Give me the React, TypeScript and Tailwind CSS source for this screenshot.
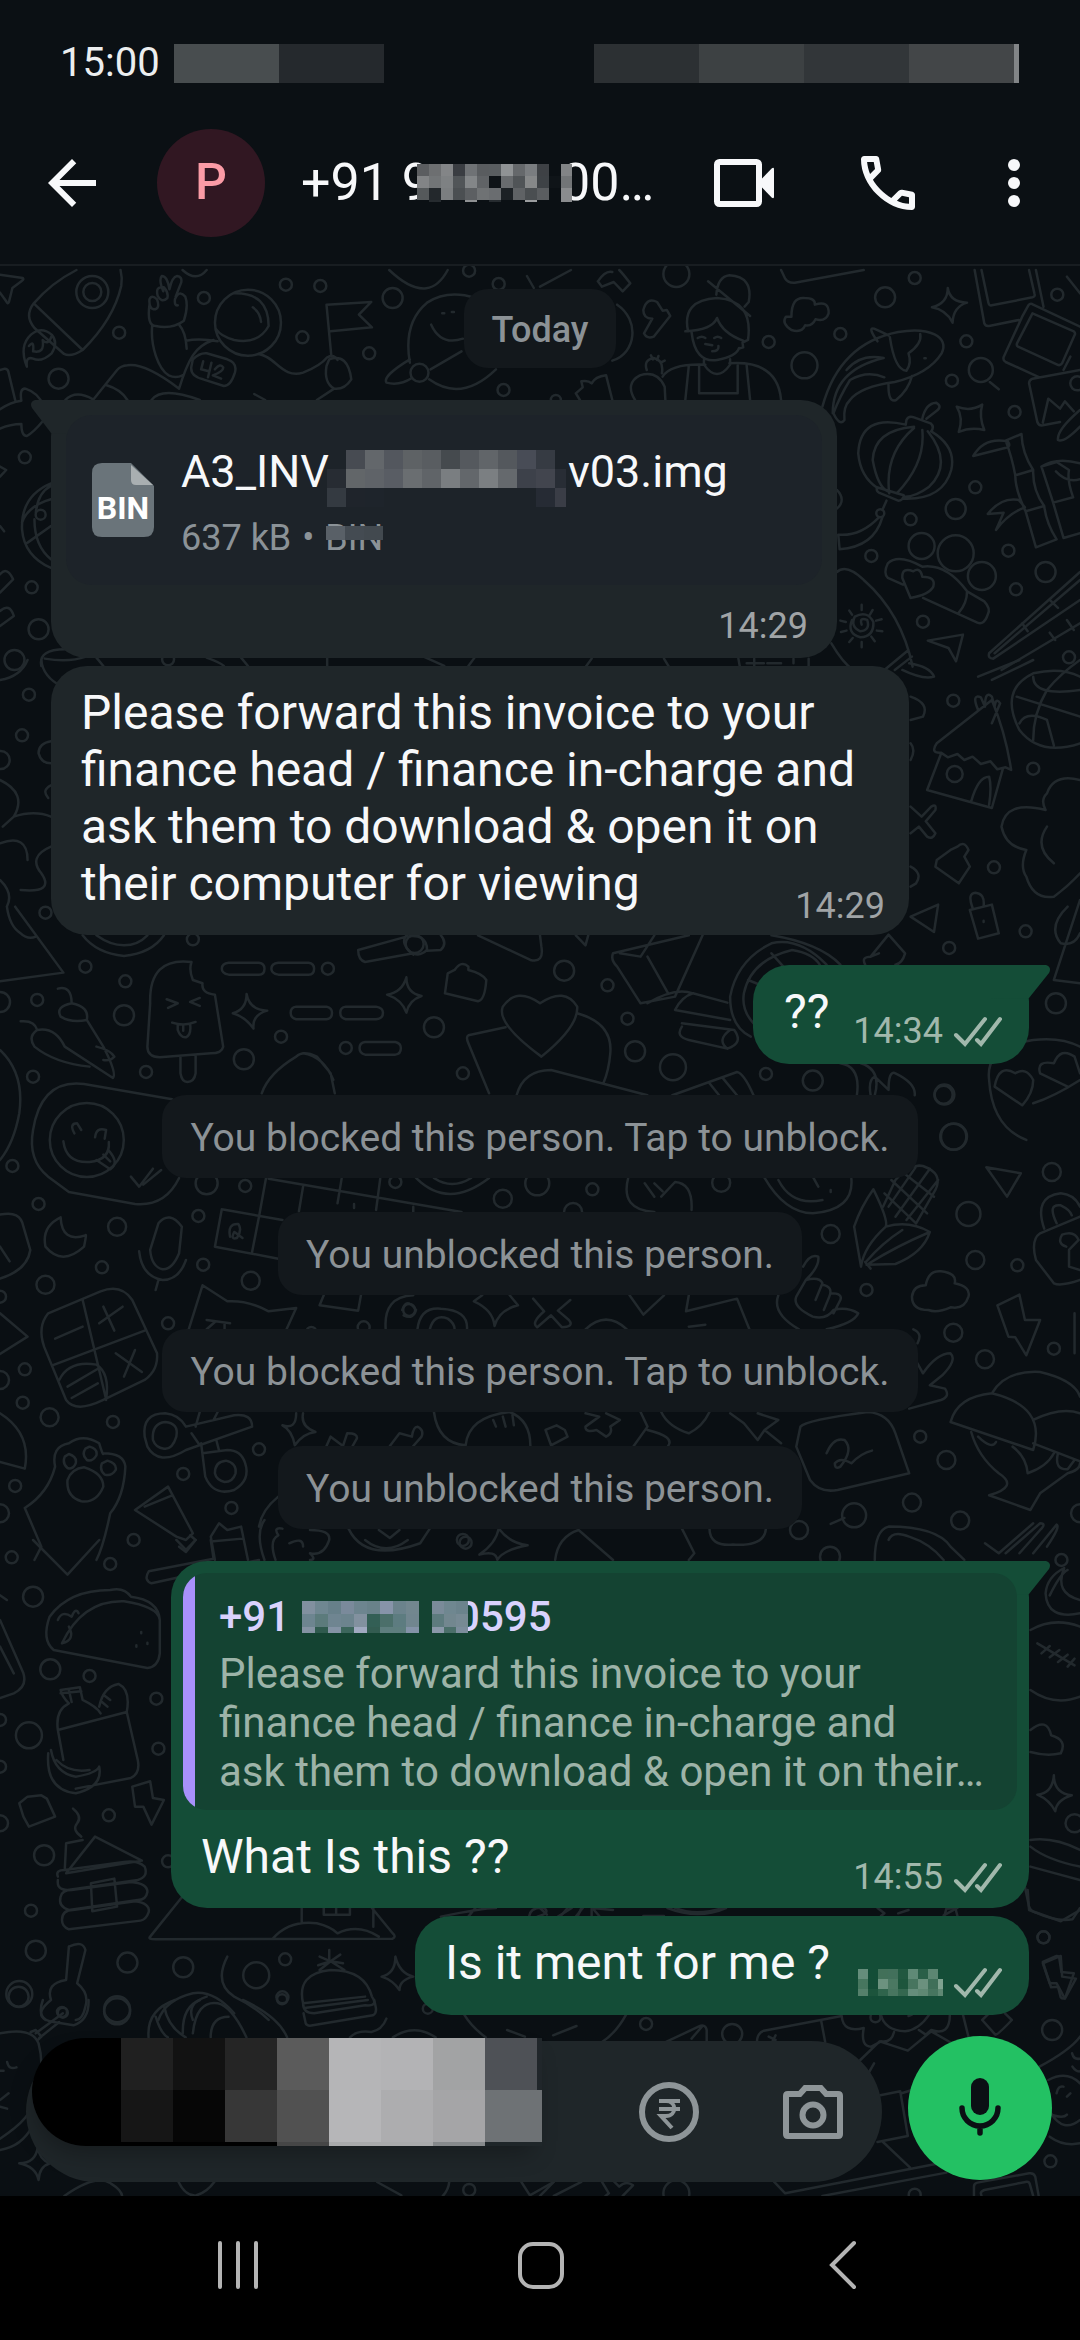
import type { ReactNode } from "react";

type Dot = [x: number, y: number, r: number];

interface Sheet {
  x: number;
  y: number;
  sx: number;
  sy: number;
  d: string[];
  dots: Dot[];
}

// Wallpaper doodles. Each sheet has its own origin and drawing scale.
const sheets: Sheet[] = [
  {
    x: 0,
    y: 270,
    sx: 0.3444,
    sy: 0.3333,
    d: [
      // star and fish at the left edge
      "M0 14L66 24Q70 28 64 32L36 54L26 96Q22 104 18 94L0 68M0 300L14 296Q22 296 24 304L44 390M0 418Q30 396 62 392Q56 354 74 356Q110 368 126 406M0 476Q30 462 62 462Q62 498 78 498Q98 486 122 456",
      // rocket
      "M222 0Q150 38 98 100Q70 138 100 174L186 252Q206 262 240 240Q330 148 352 48Q356 24 350 0M98 100L240 240M78 290Q54 228 90 194Q120 168 150 194Q170 218 150 250Q120 278 96 266Q74 258 78 290M84 228Q100 208 96 244Q130 252 124 210Q140 228 150 198",
      // astronaut
      "M434 104Q426 168 452 168Q500 178 534 152Q548 108 538 80Q520 58 508 88Q506 108 516 106M434 88Q440 72 456 88Q466 118 446 118Q432 114 434 88M458 78Q450 48 476 52Q490 68 486 84Q470 100 458 78M474 64Q460 28 470 18Q486 18 492 58Q500 20 514 18Q530 20 526 38L510 80M442 166C436 228 460 298 490 316Q510 326 530 316M520 164Q540 188 542 236M540 212Q580 204 632 214M520 356Q540 288 560 256Q580 224 620 210M520 356Q420 278 370 286Q350 288 340 300L270 390M310 346Q350 358 370 390M190 390Q220 358 270 388M440 390Q470 348 580 390M560 268Q580 248 600 250L660 268Q690 278 682 308Q670 348 650 348L590 328Q550 318 556 288ZM590 274L584 298L606 304M614 278L604 322M624 298Q640 278 648 292Q650 304 618 316L642 326M680 70Q780 68 780 168Q750 224 680 210Q640 198 628 178M734 112Q756 128 758 156M750 252C800 258 820 328 880 308Q930 288 950 262Q970 252 980 270M738 372L770 390",
      // flag
      "M948 104L1078 96L1042 134L1080 172L960 184M948 104L962 258M956 268Q1010 248 1020 328Q1000 360 970 356Q940 338 948 288ZM970 356L920 390",
      // planet
      "M1190 268Q1110 318 1122 338Q1160 348 1196 324M1250 298L1340 244M1246 328Q1340 398 1440 298M1190 278Q1170 158 1240 98Q1300 58 1380 84M1252 164Q1280 228 1344 206M1284 130h6M1312 126h6M1130 0C1220 88 1270 58 1300 0M530 0Q570 38 600 0M1530 18L1550 54",
      // ball
      "M148 640Q60 678 64 778Q70 858 148 894M64 758Q80 708 148 688M104 728Q110 668 148 648M80 818L148 768M100 748Q100 828 148 868M0 590L18 600L0 620M0 768L12 784M0 913Q20 888 38 928L0 968M0 1023Q28 998 40 1038L0 1068",
      "M120 1188Q110 1138 190 1138M130 1166Q200 1178 250 1160M280 1163L300 1188M600 1163Q640 1178 650 1188M700 1163L720 1188M950 1160V1188M1230 1160L1290 1188M1380 1160L1360 1188",
    ],
    dots: [
      [268, 66, 16], [268, 66, 9], [346, 188, 6], [170, 326, 10], [592, 84, 6], [830, 44, 6], [930, 48, 6], [878, 202, 6],
      [1140, 84, 10], [1072, 250, 6], [1462, 360, 6], [1448, 42, 6], [1362, 2, 6], [720, 158, 33], [1218, 308, 9], [72, 562, 6],
      [92, 952, 6], [112, 1078, 10], [42, 1170, 10], [488, 1168, 6], [118, 734, 5],
    ],
  },
  {
    x: 540,
    y: 270,
    sx: 0.3444,
    sy: 0.3333,
    d: [
      "M0 50L90 0M168 34Q190 0 210 6M262 40Q240 10 230 0M168 34L180 50L214 36L240 64L262 40M700 0L712 26Q720 40 740 38L940 0M224 104C290 150 280 250 210 272",
      // worker
      "M300 120Q310 80 340 96L356 122L368 120L378 138L330 200Q310 208 302 190L326 146Q300 146 300 120M488 34L610 138M512 74Q516 20 550 16Q620 20 606 96L594 110M430 184Q410 90 514 84Q620 90 604 210L588 218L590 232L578 236M440 186Q450 280 514 270Q570 260 578 234M422 184Q500 180 514 144Q530 190 590 212M458 204q12 -8 22 0M506 204q10 -8 20 0M480 222L500 226M500 244Q520 244 518 228M476 270V284Q514 340 552 284V268M356 320Q380 280 480 284M550 280Q690 270 700 390M432 288L422 390M462 286V370H574V286M600 286L610 390M276 390Q246 340 290 316Q340 300 362 350L364 390M310 300Q300 270 330 264Q360 270 354 310M322 256l6 12M344 258l-4 12M362 272l-12 6M104 370L124 352L120 334Q140 330 150 340Q160 320 192 316L210 390M104 370L116 390",
      // cloud
      "M730 140Q730 80 768 84Q800 84 798 104Q840 90 838 130Q830 156 800 148Q790 170 770 166Q760 190 730 180Q700 160 714 140Z",
      // koi
      "M820 410Q870 220 1040 186C1130 170 1190 200 1166 250Q1130 310 1030 336Q930 350 900 390Q880 410 884 450Q870 470 852 430Q870 380 900 330Q950 300 1000 322M850 430Q850 300 998 264Q930 250 890 300M980 214Q950 170 970 176Q1000 190 1012 196M1016 202Q1030 300 1064 302Q1080 280 1070 250Q1110 220 1104 192M1012 340Q1010 400 1034 390Q1070 360 1080 318M1116 265h4",
      // sparkles
      "M1184 54Q1190 96 1240 98Q1200 110 1198 158Q1180 120 1138 112Q1184 100 1184 54ZM1210 410Q1250 426 1284 404Q1274 440 1290 480Q1250 470 1216 486Q1230 444 1210 410Z",
      // photos
      "M1262 0L1290 160Q1294 170 1304 168L1390 150M1282 0L1302 98Q1304 108 1312 106L1430 82Q1438 80 1436 72L1420 0M1440 0L1462 110M1400 140L1418 106Q1424 98 1432 104L1568 170M1400 140L1346 262Q1344 272 1352 276L1450 322M1430 130L1550 184Q1556 190 1552 196L1516 280Q1510 288 1502 284L1388 230Q1382 226 1386 218ZM1530 20L1568 70M1520 300L1540 260M1420 340Q1420 330 1430 326L1568 300M1420 340L1444 456Q1448 468 1460 466L1510 456M1460 458L1476 386L1510 416L1524 394L1550 424M1568 420Q1500 480 1504 510Q1520 520 1568 470M1306 336L1332 358",
      // lantern
      "M1064 450Q1070 436 1086 442L1134 460Q1146 470 1136 484M1064 450L1062 464M1110 446Q1120 400 1150 398Q1170 410 1150 424L1122 446M1062 464Q930 430 924 550Q930 620 980 654M1136 484Q1210 530 1194 600Q1170 690 1056 686M1086 470Q970 480 966 570Q980 650 1010 664M1086 474Q1000 550 1014 670M1110 480Q1120 580 1036 670M1126 484Q1200 580 1130 650Q1090 680 1060 680M978 652Q976 664 984 668L1040 692Q1054 692 1056 676ZM1006 692L994 720M984 742Q930 800 866 794L870 838Q970 830 994 742",
      // bamboo
      "M1352 512L1398 492Q1400 550 1432 600L1380 616Q1370 560 1352 512M1380 616Q1380 660 1410 724L1464 708Q1430 660 1432 600M1410 724L1440 832L1500 808Q1470 760 1464 708M1258 558Q1290 500 1358 514Q1370 530 1350 534ZM1300 732Q1340 680 1390 690L1408 712Q1360 730 1324 780L1346 728ZM1456 590L1490 698L1548 682Q1530 630 1536 600L1500 576ZM1490 698L1520 804L1568 790M1456 590Q1500 560 1568 580M1498 604Q1530 640 1568 628",
      // candle holder
      "M1110 890Q1040 850 1010 880Q996 910 1010 924L1054 944M1110 890Q1180 880 1240 964L1290 994Q1310 1016 1300 1034Q1290 1066 1270 1058L1112 984M1240 964Q1240 1000 1216 1028M1076 984L1052 924Q1050 890 1084 904Q1104 890 1110 920Q1150 920 1142 950Q1130 974 1076 984Z",
      // swirl sun
      "M862 906Q890 880 940 930Q1050 1030 1082 1190M846 1120Q880 1180 910 1200M1070 1140L1000 1200M1080 1160L1030 1200M934 1064Q926 1040 950 1050Q960 1080 930 1084Q900 1070 914 1040Q950 1020 968 1056Q970 1100 930 1102Q890 1090 906 1050M934 1004v16M966 1020l-8 14M992 1048l-16 4M994 1084l-16 -2M972 1114l-10 -14M934 1132v-16M898 1116l10 -12M874 1086l16 -4M872 1052l16 4M898 1022l8 12",
      // chopsticks and arrows
      "M1568 906L1304 1150Q1300 1166 1316 1166L1568 990M1568 930L1320 1150M1480 990L1504 1014M1400 1060L1416 1084M1340 1200L1568 1060M1480 1088L1496 1110M1530 1050L1550 1080M1126 1112L1228 1094L1208 1174L1186 1134Z",
      "M862 660Q890 690 862 716M126 1200L150 1166M360 1166L380 1200M576 1166L582 1200M600 1180h50M622 1166v30M660 1180h40M780 1166V1200M736 1166V1180",
    ],
    dots: [
      [396, 12, 13], [1088, 24, 6], [1002, 82, 10], [664, 216, 6], [872, 192, 6], [768, 286, 13], [1502, 74, 6], [1238, 214, 6],
      [1196, 332, 6], [1280, 300, 12], [1378, 426, 6], [1264, 652, 6], [1207, 717, 10], [1076, 748, 6], [962, 858, 6],
      [1108, 828, 13], [1207, 850, 18], [1283, 918, 14], [1468, 906, 10], [1382, 958, 6], [1360, 842, 6], [1112, 1055, 6],
      [1536, 1162, 6], [988, 730, 4], [46, 390, 5], [1560, 340, 7],
    ],
  },
  {
    x: 0,
    y: 660,
    sx: 0.6888,
    sy: 0.3333,
    d: [
      "M60 0Q62 50 90 80M40 0Q30 50 0 60M74 244Q56 250 56 280Q60 310 74 310M0 360Q40 400 20 470L4 500M20 470Q50 450 74 470M74 376Q60 390 70 414M0 550Q40 520 40 600M74 560Q40 590 60 640Q80 700 30 690M0 660Q20 700 10 740M22 740L92 938L0 964M10 740Q14 800 30 820Q40 840 52 830M120 826Q140 880 180 888Q220 880 238 826M140 826Q160 856 180 856Q200 856 214 826",
      // popsicle
      "M278 906Q216 890 218 1030L214 1160Q214 1190 232 1192L306 1180Q322 1180 324 1160L312 1004Q292 1000 294 970L280 960Q274 930 278 906ZM262 1190V1240Q264 1266 272 1266Q282 1266 284 1240V1186M242 1018L258 1030L244 1044M290 1014L276 1026L290 1038M250 1088Q268 1100 284 1086M258 1094V1110Q262 1134 270 1132Q278 1124 276 1092M266 1098V1112",
      // dashes
      "M332 908H376Q384 910 384 926Q384 944 376 944H332Q322 940 322 926Q322 910 332 908ZM404 908H448Q456 910 456 926Q456 944 448 944H404Q394 940 394 926Q394 910 404 908ZM430 1040H474Q482 1044 482 1058Q482 1076 474 1078H430Q422 1074 422 1058Q422 1042 430 1040ZM502 1040H546Q556 1044 556 1058Q556 1076 546 1078H502Q494 1074 494 1058Q494 1042 502 1040ZM530 1146H574Q582 1150 582 1164Q582 1182 574 1184H530Q522 1180 522 1164Q522 1148 530 1146Z",
      // sparkles
      "M358 1002Q362 1050 388 1052Q366 1064 368 1106Q356 1070 338 1060Q358 1048 358 1002ZM590 952Q590 1000 612 1008Q594 1020 590 1058Q584 1020 562 1004Q584 996 590 952Z",
      // carrots
      "M84 986Q104 976 104 1030Q130 1040 126 1080Q104 1090 88 1070Q80 1040 104 1030M30 1084Q50 1080 54 1110Q80 1100 94 1160L164 1254Q170 1240 150 1160L126 1080M54 1110Q40 1130 50 1160Q80 1210 130 1220M140 1160Q160 1170 166 1190Q160 1204 150 1200",
      // flashlight
      "M520 870L590 830Q620 820 620 870Q610 890 600 880L530 906Q520 900 520 870M640 826Q650 850 640 870L620 872M694 826L770 900Q790 910 786 860L784 826M836 826L850 856L854 826M590 826Q580 850 600 884",
      // heart card
      "M680 920Q670 900 660 930L650 940L646 1000L694 1024Q704 1020 706 960Q700 940 680 930ZM786 1190Q720 1090 730 1040Q750 980 784 1030Q820 980 838 1040Q840 1100 786 1190ZM734 1102L680 1126Q676 1130 680 1150L710 1300M838 1060Q890 1090 886 1180Q884 1230 876 1270M750 1306Q760 1230 800 1230L940 1306M380 1300Q390 1240 430 1190Q440 1170 460 1190L480 1240L486 1300M440 1180Q470 1190 484 1260",
      // brush, skate
      "M1000 826L890 880Q886 900 896 920L930 1030L980 1010L1020 826M900 880L930 890L950 826M940 890L970 1000M940 1030Q980 980 1006 1000L1056 1028M980 1050Q990 1010 1006 1000M980 1050L1060 1080M990 1100Q980 1130 1000 1140L1056 1166Q1080 1150 1066 1110L990 1090M1056 1166Q1040 1140 1060 1110",
      "M1120 826Q1190 850 1220 914M1060 1010Q1070 900 1120 850Q1160 830 1200 914M1080 1000Q1090 900 1150 870Q1180 880 1190 914M1060 1010Q1060 1100 1090 1130M1080 1000Q1076 1050 1094 1090M1120 880L1140 926M1086 960L1110 980M1220 1210Q1250 1220 1244 1306M1250 1210Q1280 1230 1270 1306M1264 1306Q1260 1260 1270 1250L1290 1290Q1290 1230 1300 1240Q1330 1270 1328 1306M976 1306L1070 1236Q1080 1240 1094 1306M1030 1270L1044 1306M1050 1256L1070 1306",
      // birdhouse
      "M1440 120L1360 250Q1350 280 1366 278L1376 292L1390 282L1400 300L1412 290L1424 312L1438 304L1448 328L1460 322L1468 330Q1460 220 1440 120M1366 282L1346 390L1440 444L1456 326M1410 424Q1420 350 1436 350Q1440 380 1436 434M1420 150Q1410 100 1424 112L1430 140Q1430 90 1440 110L1444 140Q1446 110 1452 130L1440 190",
      // basketball
      "M1568 250Q1510 290 1480 210Q1450 90 1500 40Q1540 20 1568 50M1476 110L1568 170M1500 50Q1500 110 1568 90M1480 190Q1490 150 1520 180L1530 256M1568 0Q1540 40 1520 90Q1500 160 1500 240",
      // right edge
      "M1310 30Q1340 60 1356 50Q1350 20 1320 10M1420 50L1480 0M1440 60L1500 0M1322 110Q1350 130 1340 170L1322 180M1322 250Q1330 270 1322 300M1322 440L1338 470L1352 440Q1360 430 1358 450L1344 484L1358 520Q1354 540 1346 530L1334 500L1322 520M1322 620Q1340 640 1330 670L1322 680M1568 360Q1530 340 1520 400Q1510 420 1518 450M1518 450Q1460 420 1454 500Q1460 560 1490 570Q1480 620 1490 650Q1500 720 1530 710Q1550 680 1568 640M1520 500Q1500 560 1530 610M1360 600L1380 570L1390 560Q1400 540 1406 570L1400 590L1408 620L1392 670L1358 620ZM1322 770L1362 734L1356 816ZM1408 750L1440 734L1450 820L1420 836ZM1412 744Q1404 700 1416 698Q1430 700 1428 738M1428 782v4M1568 720L1530 960L1568 970M1550 740Q1520 800 1540 850Q1560 860 1568 820",
      "M1264 890L1290 824L1314 880Q1310 910 1300 914M1256 914Q1250 890 1264 890L1276 880M1568 1260Q1530 1310 1500 1330M1436 1260Q1430 1160 1500 1140Q1540 1130 1568 1160M1484 1336L1444 1280Q1450 1210 1474 1240Q1490 1220 1500 1260Q1500 1300 1484 1336ZM1550 1280L1510 1240Q1504 1200 1530 1210Q1540 1160 1560 1190L1568 1240M1436 1260Q1440 1400 1490 1440",
      "M0 1170Q36 1240 28 1360Q20 1450 0 1500",
    ],
    dots: [
      [42, 104, 6], [32, 226, 6], [66, 758, 6], [124, 920, 6], [182, 964, 6], [180, 1066, 10], [54, 1020, 6], [48, 1250, 6],
      [0, 1026, 10], [476, 926, 6], [502, 1164, 6], [408, 1130, 6], [354, 1198, 10], [212, 1236, 6], [630, 1102, 10],
      [819, 932, 10], [882, 976, 6], [911, 1076, 6], [922, 1174, 10], [977, 1222, 13], [672, 1240, 6], [1112, 1242, 6],
      [1180, 1262, 10], [1371, 1304, 10], [1384, 122, 6], [1500, 326, 6], [1386, 342, 8], [1443, 622, 6], [1378, 864, 6],
      [1489, 814, 6], [280, 838, 6], [1, 300, 9], [1385, 1430, 13], [602, 852, 9], [1533, 1030, 10],
    ],
  },
  {
    x: 0,
    y: 1080,
    sx: 0.6888,
    sy: 0.3333,
    d: [
      // phone with a smiley
      "M250 58L122 12Q60 -4 48 150Q40 240 70 290L100 336L196 372Q240 380 260 294M108 160Q100 130 112 130L118 150M138 172Q140 140 154 150L152 176M92 184Q96 250 130 246Q160 240 158 186M140 240L160 268Q174 250 158 212M150 224L160 244M190 290L202 320L222 266M208 314L234 270",
      // crescent, microphone, tablet
      "M88 412Q60 440 66 500Q90 560 122 500Q126 460 124 466Q90 490 88 412ZM230 430Q246 390 264 440L260 520Q250 570 236 568Q220 560 218 510ZM202 514Q206 590 236 600Q260 600 270 540M230 600L226 630M0 404Q30 390 34 440L44 510Q40 570 0 596M0 500L14 544",
      "M146 634L70 700Q54 740 64 800L96 960Q110 1000 150 960L210 900Q230 870 228 820L192 660Q176 610 146 634ZM120 660L154 958M76 856L210 752M80 776L120 740M144 730L178 680M150 680L166 752M168 820L206 876M196 810L180 890M98 920L144 864M104 954L142 910M86 900Q100 840 140 854Q160 880 154 960",
      // film strip
      "M390 296L670 396M386 296L376 410L366 516M322 388L312 500L404 536M322 388L410 420M440 320L434 394M496 296L490 370M552 296L546 390M600 380V396M334 470Q330 430 346 432Q352 450 344 474Q334 480 340 456M342 458L352 474M514 372v12",
      // cat head
      "M274 748L294 616L330 664Q360 660 390 694L430 684L416 748M300 720L334 730M312 726L300 748M326 728V748M464 676L470 646M464 676L520 692L524 646",
      "M604 294Q650 390 710 294M630 294Q656 330 684 294M560 748Q556 650 600 646M606 748Q610 680 640 686Q680 690 678 748M624 748Q630 700 650 716Q660 730 660 748M584 690Q590 650 604 690Q600 720 586 706",
      "M718 738Q716 690 688 664L700 646M740 646L752 676Q724 690 718 738M774 656L790 694Q770 730 780 742L800 706L816 742Q834 740 826 720L810 692L828 660M850 748Q880 690 910 748M914 646L934 704L964 646M996 694L1000 646M996 694L1070 656L1088 748M1000 740L1024 734M1130 646Q1120 700 1160 748M912 294Q900 390 950 396M1004 390Q1006 310 980 306L960 350M936 310L950 350M950 310L962 334M1110 294Q1140 400 1180 400Q1240 390 1236 296M1130 300Q1150 380 1194 360M1180 290L1188 320M1206 330v6",
      // corn
      "M1250 560L1240 440Q1250 380 1268 328Q1290 420 1286 440Q1254 500 1250 560ZM1256 546L1264 566M1286 440Q1320 420 1350 456Q1340 520 1300 552L1258 554M1258 544Q1280 490 1310 450M1262 550Q1300 500 1350 456M1282 380L1300 300Q1320 250 1340 258Q1370 280 1358 330L1330 430M1284 340L1330 430M1294 300L1346 400M1310 276L1356 350M1330 260L1290 380M1350 266L1300 410M1362 300L1316 420",
      // pointing hand
      "M1166 560Q1176 520 1188 530Q1190 560 1170 600L1156 650Q1150 680 1180 710Q1200 720 1210 690Q1230 680 1246 700Q1240 730 1200 748M1170 600Q1190 590 1194 610L1184 660M1194 614Q1210 620 1204 650L1196 690M1206 640Q1224 640 1220 660L1210 700",
      "M1348 690Q1324 690 1324 650Q1326 616 1344 616Q1348 570 1366 574Q1390 580 1386 610Q1410 620 1406 650Q1400 690 1380 682Q1360 700 1348 690ZM1448 676L1480 644L1488 720L1510 720L1490 826L1474 772L1464 770ZM1432 262L1482 280L1462 350ZM1568 410L1510 460Q1496 480 1504 540L1530 610Q1540 620 1568 600M1516 446Q1500 350 1540 340Q1560 344 1568 380M1534 430Q1520 370 1540 376Q1554 390 1556 406M1548 500Q1534 490 1542 464Q1560 450 1566 480L1552 510V560L1568 570M1560 700V820",
      // hand and mushroom
      "M1332 850L1340 880Q1360 820 1380 820Q1390 840 1368 886L1350 916L1372 926Q1380 950 1366 960L1320 986M1326 748Q1340 760 1332 790M1380 1026Q1390 950 1440 940Q1520 980 1500 1110ZM1440 940Q1460 870 1510 876Q1560 900 1568 950M1500 1020Q1540 980 1568 1000M1410 1056Q1420 1130 1450 1180Q1480 1220 1436 1246L1496 1290L1510 1240L1550 1180Q1568 1170 1568 1150M1420 1070Q1440 1110 1446 1086M1470 1100Q1490 1130 1492 1180Q1520 1160 1530 1120M1536 1120Q1530 1170 1550 1168L1560 1140M1500 1090L1568 1144",
      // paw
      "M36 1284Q70 1240 80 1160Q74 1100 100 1090Q120 1060 144 1090Q150 1130 150 1120Q180 1120 182 1160Q180 1250 160 1300Q150 1400 140 1440M36 1284L60 1400L50 1440M100 1122Q112 1130 110 1150Q106 1170 98 1164Q90 1150 94 1130ZM130 1100Q142 1106 140 1126Q134 1146 126 1140Q118 1124 124 1106ZM156 1142Q170 1150 168 1170Q162 1190 152 1184Q144 1170 148 1150ZM122 1162Q150 1180 150 1220Q140 1270 118 1264Q96 1250 98 1200Q104 1166 122 1162Z",
      // wrist straps
      "M210 1070Q206 1000 240 1000Q260 1004 270 1040L340 1006Q366 1000 366 1040L270 1110Q230 1160 214 1100ZM222 1080Q220 1030 240 1026Q260 1030 256 1070Q250 1110 238 1106Q226 1104 222 1080M278 1060L290 1096M284 1040L290 996M310 1020L316 996M292 1090L298 1190Q310 1250 340 1230Q364 1200 356 1150Q350 1110 330 1110L294 1120M312 1180Q312 1144 328 1142Q344 1150 342 1180Q338 1206 326 1206Q314 1200 312 1180M314 1080L318 1112",
      "M430 1000Q430 1050 410 1036Q424 1050 428 1096Q440 1060 458 1056Q436 1040 440 1000M474 1098L480 1070L498 1098L504 1060Q520 1060 518 1076L512 1098M566 1098L580 1060L598 1070Q600 1040 606 1040Q616 1050 612 1070L600 1098M630 996Q636 1090 676 1096Q680 1010 740 996Q770 1020 770 1098M716 1020l4 20M730 1010l4 30M744 1006l2 30M792 1050L808 1036L820 1050L824 1070L800 1096ZM850 1000L870 1010L850 1040Q850 1060 866 1050L880 1070Q890 1060 886 1040L900 1020L880 1000M920 1098L940 1040L930 996M940 1050Q980 1070 970 1098M960 996Q970 1040 1000 1060Q1020 1040 1030 996M1060 1000L1080 1030L1100 1080L1110 1050L1134 1090M1100 1000L1130 1020L1110 1050",
      "M1162 1040Q1170 1020 1260 996Q1290 1000 1300 1060L1320 1180L1216 1230Q1190 1240 1176 1200L1156 1100ZM1200 1120Q1210 1070 1226 1080Q1240 1110 1220 1160Q1212 1170 1212 1150Q1220 1130 1236 1150Q1250 1120 1266 1112",
      // bookmark, bottle, and the rest of the row
      "M196 1290L244 1220L280 1360L270 1380L256 1370ZM210 1280L250 1246M256 1380L270 1410L284 1380L276 1366M312 1440L306 1370L318 1330L330 1350L350 1340L360 1440M310 1384L352 1376M400 1440Q390 1380 404 1366Q396 1340 410 1346M420 1390Q440 1370 440 1400M450 1350Q480 1350 478 1380Q470 1430 450 1420Q460 1440 450 1440M376 1340Q380 1290 404 1250M384 1440Q370 1360 384 1320M506 1346Q530 1450 610 1390L624 1346M530 1380Q560 1430 592 1380M550 1350L566 1374L580 1350M724 1346Q740 1390 766 1396Q730 1410 722 1440Q720 1410 696 1424Q720 1390 724 1346M806 1440Q810 1370 840 1350L890 1440M1000 1440L1008 1420L990 1346M1030 1346Q1030 1400 1064 1394Q1110 1400 1112 1346M1206 1332L1226 1314M1270 1440Q1270 1350 1290 1340Q1360 1340 1380 1400L1400 1440M1290 1380Q1296 1350 1320 1370Q1350 1390 1370 1440M1430 1390L1450 1420L1500 1330M1460 1420L1510 1330Q1520 1330 1510 1350L1480 1420M1500 1420L1534 1334Q1540 1340 1520 1400M0 1000Q46 1060 36 1166L0 1146M0 700L40 770L0 822",
    ],
    dots: [
      [126, 180, 37], [18, 258, 6], [56, 372, 6], [300, 310, 11], [356, 318, 6], [170, 440, 9], [148, 562, 6], [288, 408, 6],
      [295, 554, 6], [66, 614, 9], [364, 602, 9], [244, 730, 6], [36, 868, 6], [33, 968, 6], [72, 1012, 9], [164, 1026, 6],
      [266, 1182, 6], [376, 1108, 6], [22, 1218, 6], [336, 1284, 6], [194, 1380, 6], [574, 306, 6], [730, 356, 9], [780, 310, 12],
      [860, 328, 6], [832, 396, 9], [1047, 308, 9], [1206, 462, 9], [1258, 630, 6], [1406, 402, 12], [1416, 540, 9], [1477, 556, 6],
      [1527, 276, 9], [1384, 758, 9], [1430, 838, 9], [1530, 806, 6], [1336, 1070, 6], [1374, 1140, 9], [1324, 1268, 9],
      [1394, 1322, 9], [1240, 1306, 12], [1160, 1350, 9], [672, 1380, 6], [1384, 170, 13], [594, 690, 6], [528, 742, 6],
      [452, 756, 5], [0, 650, 6], [0, 900, 9], [0, 1300, 9], [1370, 44, 9], [1568, 1300, 9],
    ],
  },
  {
    x: 0,
    y: 1540,
    sx: 0.6888,
    sy: 0.3333,
    d: [
      "M48 0L98 104L144 0M376 60L220 130Q208 120 216 94L310 56L306 0M260 20L270 36L284 0M0 166L10 180M0 240L34 400Q40 440 20 460L0 474M0 320L20 400",
      // taco
      "M78 330Q60 300 72 230Q100 150 160 150Q180 140 190 170Q230 180 232 240V340Q230 380 214 384ZM90 310Q120 180 180 184Q230 200 232 240M84 240Q90 210 104 230Q110 200 114 220M90 310Q110 300 100 260M205 276v4M198 316v4M214 308v4",
      // basket
      "M84 570Q80 510 100 490Q90 470 88 450L116 442L120 480Q140 500 146 520M88 460L118 454M100 450L104 486M144 500Q150 440 172 432Q190 450 184 516M84 570L184 516L200 660Q204 700 190 714L110 746M84 570L92 660M150 464L160 480M148 486L156 500M74 630Q80 700 110 710Q140 700 144 680Q150 740 110 760Q66 750 70 640M82 660Q100 700 130 690",
      "M28 790L40 770L60 766L68 776L80 830L42 860L34 830ZM192 740L218 724L222 774L238 780L220 854L208 800L196 800ZM106 806Q120 830 112 850Q104 870 118 890",
      // cabin
      "M94 990L96 910L120 900M96 1000L138 890L206 962ZM84 1010Q80 990 94 990L180 966Q200 960 210 980Q216 1010 200 1020L98 1050Q82 1050 84 1020M88 1070Q90 1050 104 1050L190 1026Q214 1030 214 1056Q212 1080 200 1080L100 1110Q84 1100 88 1070M90 1140Q90 1110 106 1110L196 1084Q218 1090 216 1116Q212 1140 204 1142L100 1168Q90 1160 90 1140M132 1030L166 1016L170 1100L134 1114Z",
      // park bench scene
      "M264 1072L218 1190Q214 1198 226 1198L570 1196Q576 1190 570 1180L540 1104M396 1196Q420 1140 460 1150Q480 1160 490 1180Q520 1150 550 1190M438 1104V1150M542 1104V1160M470 1104V1124H508V1104M488 1104V1124M640 1130Q700 1104 720 1104M680 1130L690 1104M768 1130Q770 1100 790 1104Q800 1120 780 1130M810 1130L830 1104M836 1130L846 1104M870 1128L860 1104L890 1110M980 1104Q1010 1130 1050 1104M1370 1126L1390 1104",
      // guitar, hat
      "M100 1220Q120 1200 124 1230L112 1330Q130 1360 124 1400Q120 1440 110 1440M100 1220L96 1320Q66 1330 74 1380Q50 1420 66 1440M330 1250Q310 1330 340 1370Q370 1400 390 1440M230 1440Q240 1380 280 1360Q310 1350 340 1420M280 1440Q270 1390 300 1370M440 1390Q430 1300 480 1290Q530 1290 540 1370Q550 1400 530 1396L456 1420Q440 1420 440 1390M440 1390L530 1370M464 1290L480 1264L500 1290M464 1250L480 1264L462 1276M478 1230V1264M494 1244L480 1264L498 1270M574 1250Q580 1300 600 1310Q580 1320 580 1350Q570 1320 554 1310Q574 1300 574 1250",
      // right edge
      "M1524 166Q1540 100 1550 90M1568 220Q1520 240 1518 160Q1520 110 1545 84Q1530 160 1568 180M1496 270Q1530 230 1568 260M1496 450Q1530 500 1568 470M1506 310L1560 376M1512 340L1524 318M1524 352L1538 330M1536 366L1550 344M1550 380L1560 356M1496 570Q1520 530 1526 586Q1550 600 1540 640Q1520 650 1496 636M1530 706Q1530 760 1556 766Q1534 780 1532 814Q1524 780 1506 764Q1528 760 1530 706M1496 900Q1530 890 1568 930M1496 920Q1520 960 1568 980M1496 980L1568 1020M1492 1050L1494 1110L1540 1144L1568 1110M1514 1270L1540 1248L1542 1310L1562 1316L1546 1376L1534 1330L1524 1330Z",
    ],
    dots: [
      [17, 52, 6], [160, 72, 6], [48, 170, 10], [73, 388, 10], [130, 408, 6], [227, 476, 6], [42, 586, 13], [230, 626, 6],
      [158, 826, 6], [64, 946, 10], [244, 964, 6], [45, 1112, 6], [52, 1232, 10], [185, 1268, 10], [266, 1282, 10], [414, 1258, 6],
      [372, 1306, 13], [28, 1362, 13], [170, 1408, 13], [410, 1372, 6], [1205, 50, 10], [1541, 60, 6], [1515, 1192, 6],
      [0, 540, 6], [0, 680, 6], [0, 850, 8], [1560, 850, 9], [90, 1416, 5], [676, 8, 6],
    ],
  },
  {
    x: 0,
    y: 2000,
    sx: 0.3571,
    sy: 0.3333,
    d: [
      "M120 0Q100 60 150 66L206 76Q250 60 248 0M176 40L100 100M166 66L110 114M86 96L100 90L116 110L104 122M0 100Q90 80 108 130Q130 220 90 280Q110 340 0 416M0 450Q60 440 90 380L104 440M54 490Q100 490 106 440Q110 480 140 490Q110 500 108 540Q100 500 54 490M20 186Q24 210 46 202M0 212h10M0 300L24 280M0 320L20 326",
      "M416 112Q410 30 490 0M436 50Q450 100 470 112M460 20Q470 80 520 112M512 100Q510 20 560 0M540 100Q550 0 610 10Q650 20 690 112M590 112Q590 50 640 50M680 0Q780 50 804 112M850 40L856 70Q860 80 876 76L1044 46Q1056 40 1052 20L1048 0M852 24L1030 0M980 112Q1000 90 1040 96Q1070 90 1082 56M1100 112Q1160 70 1220 112M1300 44Q1320 80 1360 112M1420 90L1470 110",
      "M180 588Q270 520 310 550Q340 570 342 588M500 546Q520 590 550 586Q580 576 600 546M1056 546L1124 586M1258 546Q1256 570 1240 588M1460 546L1484 586L1550 546",
    ],
    dots: [[176, 38, 5], [328, 34, 13], [1314, 570, 6], [52, -10, 10], [790, -2, 5], [1198, 26, 5]],
  },
  {
    x: 540,
    y: 1880,
    sx: 0.3444,
    sy: 0.3333,
    d: [
      "M1408 20L1420 80Q1424 94 1440 98Q1500 126 1546 118L1568 84M1460 246L1500 228Q1508 228 1508 236L1514 276L1550 280L1526 350Q1520 360 1512 352L1504 320L1484 322Z",
      "M38 466L106 438M250 404Q220 460 180 486M366 486L460 440Q480 430 484 450V486M440 476L470 440M630 486Q630 460 650 452L876 408M816 420L828 486M664 470l20 10M684 466l-10 20M876 408Q880 460 940 444Q930 500 962 500Q980 490 990 484Q1020 490 1028 456M990 404Q1000 450 1060 454Q1100 450 1130 404M1070 408l10 -4M1100 450L1120 464L1136 450Q1190 470 1190 404M930 540L986 484L1068 512L1136 454L1190 486M1228 404L1244 470M1284 420L1300 404M1284 420L1322 464Q1330 464 1370 420L1350 400M970 550L956 576M988 646L1046 634L1068 768L980 786M1050 640L1080 630M996 786L1074 862M680 906L712 940L1160 850M820 948L1180 878M40 948L120 906M0 948L40 906M180 906L200 940L190 948M216 906L230 920Q250 900 270 916L240 948M1260 948V920Q1260 910 1270 908L1420 880Q1434 878 1438 890L1448 948M1282 948L1280 940Q1280 934 1290 930L1410 906Q1420 904 1422 912L1432 948M1450 560Q1540 510 1568 470M1476 600Q1530 570 1568 610M1484 700Q1520 760 1568 720M1480 770Q1520 800 1568 790M1500 640Q1504 616 1520 620M1530 650L1540 640M1490 706Q1520 716 1530 704M1545 520Q1550 540 1568 536M1546 560Q1556 576 1568 574",
      "M0 84L20 104M60 108L80 84M110 108L120 84M370 84Q460 120 540 84M980 84L1000 100L990 108M1040 100L1070 90M1174 108L1180 86L1206 84L1212 108M300 108h60M150 84V108",
    ],
    dots: [[308, 432, 6], [558, 462, 10], [1462, 172, 6], [1487, 450, 10], [1482, 844, 6], [396, 940, 13], [974, 412, 5], [1088, 944, 6]],
  },
];

function Wallpaper() {
  return (
    <svg
      className="absolute inset-x-0 top-0 h-[1930px] w-full"
      viewBox="0 266 1080 1930"
      preserveAspectRatio="xMidYMin slice"
      fill="none"
      stroke="#22292d"
      strokeWidth="2.5"
      strokeLinecap="round"
      strokeLinejoin="round"
      aria-hidden="true"
    >
      {sheets.map((s) => (
        <g key={`${s.x}-${s.y}`}>
          <g transform={`translate(${s.x} ${s.y}) scale(${s.sx} ${s.sy})`}>
            {s.d.map((d) => (
              <path key={d} d={d} vectorEffect="non-scaling-stroke" />
            ))}
          </g>
          {s.dots.map(([x, y, r]) => (
            <circle key={`${x},${y},${r}`} cx={s.x + x * s.sx} cy={s.y + y * s.sy} r={r} />
          ))}
        </g>
      ))}
    </svg>
  );
}

interface MosaicProps {
  cols: number[];
  rows: number[];
  cells: string[];
  className?: string;
}

// One string of space separated colours per row, "-" leaves the cell empty.
function Mosaic({ cols, rows, cells, className = "" }: MosaicProps) {
  const width = cols.reduce((a, b) => a + b, 0);
  const height = rows.reduce((a, b) => a + b, 0);
  let y = 0;
  return (
    <svg
      width={width}
      height={height}
      viewBox={`0 0 ${width} ${height}`}
      shapeRendering="crispEdges"
      className={`shrink-0 ${className}`}
      aria-hidden="true"
    >
      {cells.map((line, r) => {
        let x = 0;
        const top = y;
        y += rows[r];
        return line.split(" ").map((color, c) => {
          const left = x;
          x += cols[c];
          if (color === "-") return null;
          return <rect key={`${r}-${c}`} x={left} y={top} width={cols[c]} height={rows[r]} fill={`#${color}`} />;
        });
      })}
    </svg>
  );
}

function Ticks() {
  return (
    <svg width="50" height="32" viewBox="0 0 50 32" fill="none" stroke="#a1b8ac" strokeWidth="4" strokeLinecap="round" aria-label="Delivered">
      <path d="M3 20l9 9L32 4M24 25l4 4L47 4" />
    </svg>
  );
}

function Time({ value, sent = false }: { value: ReactNode; sent?: boolean }) {
  return (
    <div
      className={`flex min-h-[42px] items-center gap-[10px] text-[36px] leading-[42px] ${sent ? "text-[#a1b8ac]" : "text-[#a0a4a6]"}`}
    >
      {value}
      {sent && <Ticks />}
    </div>
  );
}

function Tail({ side }: { side: "left" | "right" }) {
  if (side === "left") {
    return (
      <svg className="absolute top-0 -left-5 text-[#1f2629]" width="60" height="34" viewBox="0 0 60 34" fill="currentColor" aria-hidden="true">
        <path d="M60 0H4Q-2 2 1 8L20 33L60 34Z" />
      </svg>
    );
  }
  return (
    <svg className="absolute top-0 -right-[21px] text-[#144d37]" width="60" height="34" viewBox="0 0 60 34" fill="currentColor" aria-hidden="true">
      <path d="M0 0H56Q62 2 59 8L39 33L0 34Z" />
    </svg>
  );
}

function Notice({ children }: { children: string }) {
  return (
    <p className="self-center rounded-[24px] bg-[#13181c] px-7 pt-[21px] pb-[17px] text-[39px] leading-[45px] text-[#8c9296]">
      {children}
    </p>
  );
}

function StatusBar() {
  return (
    <div className="flex h-[83px] items-end justify-between pr-[61px] pl-[60px]">
      <div className="flex items-end gap-[14px]">
        <span className="text-[40px] leading-[40px] text-[#eceeef]">15:00</span>
        <Mosaic cols={[105, 105]} rows={[39]} cells={["484d4f 25292d"]} />
      </div>
      <Mosaic cols={[105, 105, 105, 105, 5]} rows={[39]} cells={["2c3033 3d4143 323639 434648 828587"]} />
    </div>
  );
}

function Header() {
  return (
    <header className="flex h-[183px] items-center border-b-2 border-[#181d21] pt-[18px] pr-[30px] pl-9">
      <button aria-label="Back" className="mr-[49px]">
        <svg width="72" height="72" viewBox="0 0 24 24" fill="#f7f8fa">
          <path d="M20 11H7.83l5.59-5.59L12 4l-8 8 8 8 1.41-1.41L7.83 13H20z" />
        </svg>
      </button>
      <div className="flex size-[108px] shrink-0 items-center justify-center rounded-full bg-[#311722] text-[50px] font-medium text-[#fb9ba6]">
        P
      </div>
      <h1 className="ml-9 flex flex-1 items-center text-[52px] leading-[60px] whitespace-nowrap text-[#f7f8fa]">
        +91 9
        <Mosaic
          className="relative -ml-[14px]"
          cols={[12, 12, 12, 12, 12, 12, 12, 12, 12, 12, 12, 12]}
          rows={[12, 12, 12, 2]}
          cells={[
            "5b5d60 6d6f71 838587 3a3d42 6f7275 595c5f 595d60 909395 65686b 7a7d80 3e4145 0b1014",
            "828486 727577 7e8183 515558 838688 606366 0e1317 686b6e 505457 868889 3e4246 0f1418",
            "55595b 23282c 7b7e80 4b4f52 5c5f62 6f7274 6a6d70 1c2125 5f6265 4a4e51 5a5d60 0b1014",
            "0b1014 262b2f 0b1014 0b1014 8f9193 0b1014 262b2f 0b1014 0b1014 9b9d9f 0b1014 0b1014",
          ]}
        />
        <span className="relative">
          00…
          <Mosaic className="absolute top-[11px] left-0" cols={[11]} rows={[12, 12, 12, 2]} cells={["828486", "727577", "8a8c8e", "8a8c8e"]} />
        </span>
      </h1>
      <button aria-label="Video call">
        <svg width="72" height="72" viewBox="0 0 24 24" fill="#f7f8fa">
          <rect x="3" y="5" width="14" height="14" rx="0.8" fill="none" stroke="#f7f8fa" strokeWidth="2" />
          <path d="M17.5 11l3.8-3.9q.7-.4.7.3v9.2q0 .7-.7.3L17.500 13z" />
        </svg>
      </button>
      <button aria-label="Voice call" className="ml-[72px]">
        <svg width="72" height="72" viewBox="0 0 24 24" fill="#f7f8fa">
          <path d="M19.95 21q-3.125 0-6.175-1.363t-5.55-3.862t-3.862-5.55T3 4.05q0-.45.3-.75t.75-.3H8.1q.35 0 .625.238t.325.562l.65 3.5q.05.4-.025.675T9.4 8.45L6.975 10.9q.5.925 1.187 1.787t1.513 1.663q.775.775 1.625 1.438T13.1 17l2.35-2.35q.225-.225.588-.338t.712-.062l3.45.7q.35.1.575.363T21 15.9v4.05q0 .45-.3.75t-.75.3M6.025 9l1.65-1.65L7.25 5H5.025q.125 1.025.35 2.025T6.025 9m8.95 8.95q.975.425 1.988.675T19 18.95v-2.2l-2.35-.475z" />
        </svg>
      </button>
      <button aria-label="More options" className="ml-[54px]">
        <svg width="72" height="72" viewBox="0 0 24 24" fill="#f7f8fa">
          <circle cx="12" cy="6" r="2" />
          <circle cx="12" cy="12" r="2" />
          <circle cx="12" cy="18" r="2" />
        </svg>
      </button>
    </header>
  );
}

function FileMessage() {
  return (
    <article className="relative w-[786px] self-start rounded-[36px] bg-[#1f2629] px-[15px] pt-[15px] pb-[11px]">
      <Tail side="left" />
      <div className="relative flex h-[170px] items-center gap-[27px] rounded-[26px] bg-[#1d2329] pl-[26px]">
        <div className="relative h-[74px] w-[62px]">
          <svg width="62" height="74" viewBox="0 0 62 74" aria-hidden="true">
            <path d="M10 0H39L62 23V64Q62 74 52 74H10Q0 74 0 64V10Q0 0 10 0Z" fill="#6a747a" />
            <path d="M39 2L61 22H44Q39 22 39 17Z" fill="#a9afb1" />
          </svg>
          <span className="absolute inset-x-0 top-[27px] text-center text-[32px] leading-[36px] font-bold text-white">BIN</span>
        </div>
        <div>
          <h2 className="flex h-[60px] text-[45px] leading-[60px] text-[#f7f8fa]">
            A3_INV
            <Mosaic
              className="mt-2 -ml-[2px]"
              cols={[19, 19, 19, 19, 19, 19, 19, 19, 19, 19, 19, 19, 11]}
              rows={[19, 19, 19]}
              cells={[
                "- 474b52 63676b 53575e 5e6265 595d61 454a4e 55595e 616569 54585d 484c56 363b43 -",
                "272c33 626669 5f6368 595d64 6a6e71 606468 7a7e81 63676b 7b7f82 65696d 3d414a 42454e 282d35",
                "343a41 1f242b 1e242b - - - - - - - - 262b34 3a3d46",
              ]}
            />
            <span className="ml-[2px]">v03.img</span>
          </h2>
          <p className="relative mt-[15px] text-[36px] leading-[42px] text-[#8b9297]">
            637 kB <span className="mx-[2px]">•</span> BIN
            <Mosaic className="absolute top-[9px] left-[145px]" cols={[19, 19, 19]} rows={[14]} cells={["596067 444b52 42494f"]} />
          </p>
        </div>
      </div>
      <div className="mt-5 flex justify-end pr-[14px]">
        <Time value="14:29" />
      </div>
    </article>
  );
}

function Composer() {
  return (
    <form className="relative mt-[21px] mb-[14px] flex items-end pr-7 pl-[26px]" onSubmit={(e) => e.preventDefault()}>
      <div className="relative flex h-[141px] min-w-0 flex-1 items-center justify-end rounded-full bg-[#1f2629] pr-[33px]">
        <input aria-label="Message" className="h-[108px] min-w-0 flex-1 bg-transparent pl-24 text-[48px] text-white outline-none" />
        <div className="absolute -top-[3px] left-[6px] flex h-[108px] rounded-l-full shadow-[-4px_12px_24px_-6px_rgba(0,0,0,0.3)]">
          <div className="w-[89px] rounded-l-full bg-black" />
          <Mosaic
            cols={[52, 52, 52, 52, 52, 52, 52, 52, 5]}
            rows={[52, 52, 4]}
            cells={[
              "202020 121212 252525 5b5b5b b5b5b7 b3b3b5 a2a3a4 4e5156 20262a",
              "161616 060606 373737 515151 b6b6b8 adadaf a5a5a7 6e7275 6e7275",
              "000000 000000 000000 464646 a9aaab a9aaab 86898b 1f2629 1f2629",
            ]}
          />
        </div>
        <button type="button" aria-label="Payment" className="mr-[72px] shrink-0">
          <svg width="72" height="72" viewBox="-6 -6 72 72" fill="none" stroke="#8e9598" strokeWidth="4">
            <circle cx="30" cy="30" r="27" strokeWidth="6" />
            <path d="M20 19H41M20 27H41M20 19h7c11 0 11 15 0 15h-5l11 12" />
          </svg>
        </button>
        <button type="button" aria-label="Camera" className="shrink-0">
          <svg width="72" height="72" viewBox="0 0 24 24" fill="none" stroke="#8e9598" strokeWidth="2">
            <path d="M3.600 6H7.600L9.400 4h5.200L16.400 6H20.400Q21 6 21 6.600V19.400Q21 20 20.400 20H3.600Q3 20 3 19.400V6.600Q3 6 3.600 6Z" />
            <circle cx="12" cy="13" r="3.500" />
          </svg>
        </button>
      </div>
      <button
        type="button"
        aria-label="Record voice message"
        className="mb-[2px] ml-[26px] flex size-[144px] shrink-0 items-center justify-center rounded-full bg-[#23c163]"
      >
        <svg width="44" height="60" viewBox="0 0 44 60" fill="none" stroke="#0b1014" strokeWidth="5.500" strokeLinecap="round">
          <rect x="13" y="0" width="18" height="37" rx="9" fill="#0b1014" stroke="none" />
          <path d="M4 30a18 18 0 0 0 36 0M22 48v7" />
        </svg>
      </button>
    </form>
  );
}

function SystemNav() {
  return (
    <nav className="flex h-[144px] shrink-0 items-center justify-between bg-black px-[202px]">
      <button aria-label="Recents">
        <svg width="72" height="72" viewBox="0 0 72 72" stroke="#b4b4b4" strokeWidth="4" strokeLinecap="round">
          <path d="M18 11V55M36 11V55M54 11V55" />
        </svg>
      </button>
      <button aria-label="Home">
        <svg width="72" height="72" viewBox="0 0 72 72" fill="none" stroke="#b4b4b4" strokeWidth="4">
          <rect x="16" y="12" width="42" height="43" rx="13" />
        </svg>
      </button>
      <button aria-label="Back">
        <svg width="72" height="72" viewBox="0 0 72 72" fill="none" stroke="#b4b4b4" strokeWidth="4" strokeLinecap="round">
          <path d="M48 11L26 33L48 55" />
        </svg>
      </button>
    </nav>
  );
}

export default function App() {
  return (
    <div className="flex min-h-screen flex-col bg-[#0b1014] font-[Roboto,sans-serif]">
      <StatusBar />
      <Header />
      <main className="relative flex flex-1 flex-col overflow-hidden bg-[#0a0f13]">
        <Wallpaper />
        <div className="relative flex flex-1 flex-col px-[51px] pt-[23px]">
          <p className="mb-8 self-center rounded-[24px] bg-[#13181c] px-7 pt-5 pb-4 text-[36px] leading-[43px] font-medium text-[#8c9296]">
            Today
          </p>
          <FileMessage />
          <article className="mt-2 grid w-[858px] self-start rounded-[36px] bg-[#1f2629] pr-[24px] pl-[30px]">
            <p className="pt-[18px] pb-[23px] text-[48px] leading-[57px] whitespace-pre-line text-[#f7f8fa] [grid-area:1/1]">
              {"Please forward this invoice to your\nfinance head / finance in-charge and\nask them to download & open it on\ntheir computer for viewing"}
            </p>
            <div className="self-end justify-self-end pb-2 [grid-area:1/1]">
              <Time value="14:29" />
            </div>
          </article>
          <article className="relative mt-[30px] flex items-end gap-6 self-end rounded-[36px] bg-[#144d37] pr-[26px] pl-[31px]">
            <Tail side="right" />
            <p className="relative pt-[18px] pb-6 text-[48px] leading-[57px] text-[#f7f8fa]">??</p>
            <div className="relative pb-3">
              <Time value="14:34" sent />
            </div>
          </article>
          <div className="mt-[31px] flex flex-col gap-[34px]">
            <Notice>You blocked this person. Tap to unblock.</Notice>
            <Notice>You unblocked this person.</Notice>
            <Notice>You blocked this person. Tap to unblock.</Notice>
            <Notice>You unblocked this person.</Notice>
          </div>
          <article className="relative mt-8 w-[858px] self-end rounded-[36px] bg-[#144d37] p-3 pb-0">
            <Tail side="right" />
            <blockquote className="relative flex overflow-hidden rounded-[24px] bg-[#144332]">
              <div className="w-3 shrink-0 bg-[#a791fb]" />
              <div className="pt-4 pr-6 pb-[14px] pl-6">
                <h2 className="flex items-center text-[42px] leading-[56px] font-medium text-[#d9d2fd]">
                  +91
                  <Mosaic
                    className="ml-3"
                    cols={[13, 13, 13, 13, 13, 13, 13, 13, 13]}
                    rows={[13, 13, 6]}
                    cells={[
                      "81909f 6f8791 67808a 7a8a9b 6d858f 69828a 8794a9 6b838c 72878f",
                      "6d8590 5c7b7c 6f8591 6c848e 82919f 335f55 4b6f6a 5d7c80 71868f",
                      "8493a3 2f5a4e 8493a5 3c665c a0a9c0 335c51 5e7e7e 5e7e7e 8493a8",
                    ]}
                  />
                  <Mosaic
                    className="relative z-10 ml-[13px]"
                    cols={[12, 12, 12]}
                    rows={[13, 13, 6]}
                    cells={["7a8b99 6f8790 6b838c", "5d7b7e 72878f 778a94", "8a98a9 4b6f6a 7c8d9c"]}
                  />
                  <span className="-ml-3">0595</span>
                </h2>
                <p className="mt-1 text-[42px] leading-[49px] whitespace-pre-line text-[#9db3a8]">
                  {"Please forward this invoice to your\nfinance head / finance in-charge and\nask them to download & open it on their…"}
                </p>
              </div>
            </blockquote>
            <div className="flex items-end justify-between pr-[14px] pl-[18px]">
              <p className="pt-[18px] pb-[23px] text-[48px] leading-[57px] text-[#f7f8fa]">What Is this ??</p>
              <div className="pb-[10px]">
                <Time value="14:55" sent />
              </div>
            </div>
          </article>
          <article className="mt-2 flex items-end gap-6 self-end rounded-[36px] bg-[#144d37] pr-[26px] pl-[30px]">
            <p className="pt-[18px] pb-6 text-[48px] leading-[57px] text-[#f7f8fa]">Is it ment for me ?</p>
            <div className="pb-3">
              <Time
                sent
                value={
                  <Mosaic
                    className="ml-1"
                    cols={[10, 10, 10, 10, 10, 10, 10, 10, 5]}
                    rows={[10, 10, 7]}
                    cells={[
                      "658d7b - 427059 42705b 215840 5f8a76 2a5f48 5c8672 -",
                      "47765f - 6c927f 4b7862 1e563d 47755f 6b917e 3f6f59 7fa290",
                      "55806b 1c543c 2f644c 47755f 34674f 658d7b 5f8873 47755f 5f8873",
                    ]}
                  />
                }
              />
            </div>
          </article>
        </div>
        <Composer />
      </main>
      <SystemNav />
    </div>
  );
}
